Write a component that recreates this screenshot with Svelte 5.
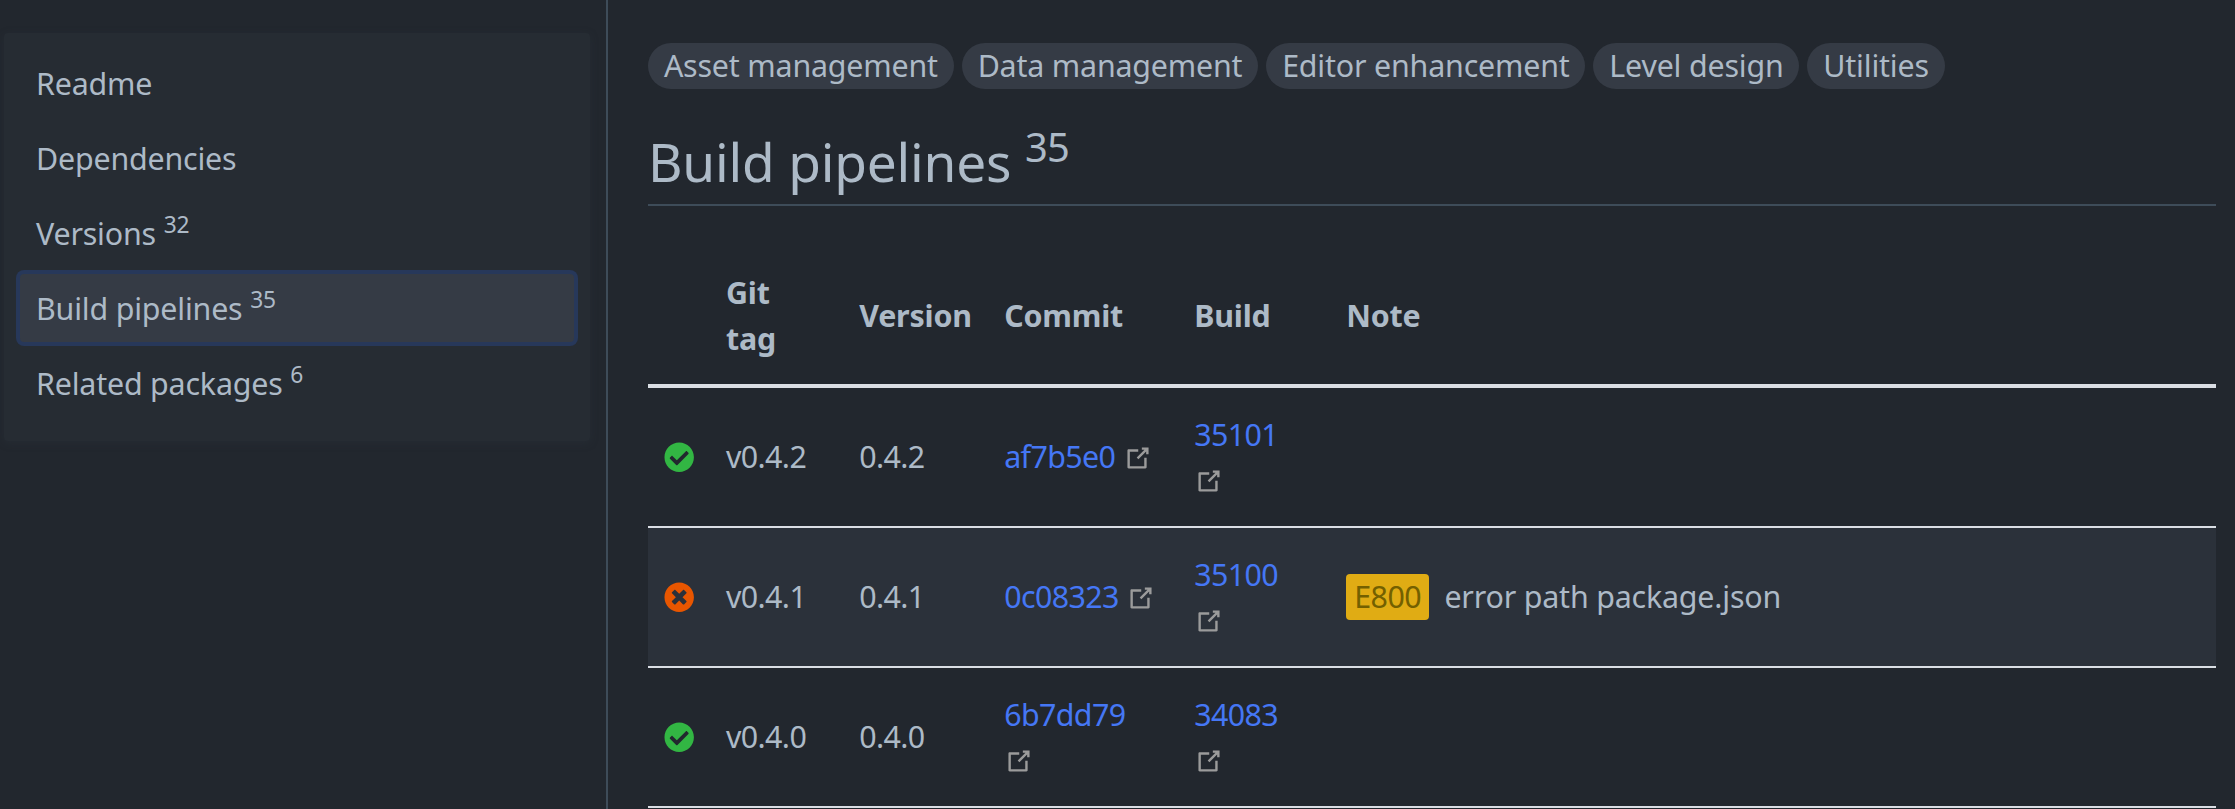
<script>
  const nav = [
    { label: 'Readme' },
    { label: 'Dependencies' },
    { label: 'Versions', count: 32 },
    { label: 'Build pipelines', count: 35, active: true },
    { label: 'Related packages', count: 6 },
  ];

  const topics = ['Asset management', 'Data management', 'Editor enhancement', 'Level design', 'Utilities'];

  const builds = [
    { ok: true, tag: 'v0.4.2', version: '0.4.2', commit: 'af7b5e0', build: '35101' },
    { ok: false, tag: 'v0.4.1', version: '0.4.1', commit: '0c08323', build: '35100', code: 'E800', note: 'error path package.json' },
    { ok: true, tag: 'v0.4.0', version: '0.4.0', commit: '6b7dd79', build: '34083', stacked: true },
  ];
</script>

{#snippet outbound()}
  <svg class="outbound" viewBox="0 0 100 100" aria-hidden="true">
    <path d="M18.8,85.1h56l0,0c2.2,0,4-1.8,4-4v-32h-8v28h-48v-48h28v-8h-32l0,0c-2.2,0-4,1.8-4,4v56C14.8,83.3,16.6,85.1,18.8,85.1z" />
    <polygon points="45.7,48.7 51.3,54.3 77.2,28.5 77.2,37.2 85.2,37.2 85.2,14.9 62.8,14.9 62.8,22.9 71.5,22.9" />
  </svg>
{/snippet}

<div class="page">
  <aside>
    <ul class="menu">
      {#each nav as item}
        <li>
          <a href="#top" class:active={item.active}>{item.label}{#if item.count}{' '}<sup>{item.count}</sup>{/if}</a>
        </li>
      {/each}
    </ul>
  </aside>

  <main>
    <div class="topics">
      {#each topics as topic}
        <span class="topic">{topic}</span>
      {/each}
    </div>

    <h3>Build pipelines <sup>35</sup></h3>

    <table>
      <colgroup>
        <col class="c-status" /><col class="c-tag" /><col class="c-version" />
        <col class="c-commit" /><col class="c-build" /><col />
      </colgroup>
      <thead>
        <tr>
          <th></th>
          <th>Git<br />tag</th>
          <th>Version</th>
          <th>Commit</th>
          <th>Build</th>
          <th>Note</th>
        </tr>
      </thead>
      <tbody>
        {#each builds as row}
          <tr>
            <td>
              {#if row.ok}
                <svg class="status ok" viewBox="0 0 512 512"><path d="M504 256c0 136.967-111.033 248-248 248S8 392.967 8 256 119.033 8 256 8s248 111.033 248 248zM227.314 387.314l184-184c6.248-6.248 6.248-16.379 0-22.627l-22.627-22.627c-6.248-6.249-16.379-6.249-22.628 0L216 308.118l-70.059-70.059c-6.248-6.248-16.379-6.248-22.628 0l-22.627 22.627c-6.248 6.248-6.248 16.379 0 22.627l104 104c6.249 6.249 16.379 6.249 22.628.001z" /></svg>
              {:else}
                <svg class="status fail" viewBox="0 0 512 512"><path d="M256 8C119 8 8 119 8 256s111 248 248 248 248-111 248-248S393 8 256 8zm121.6 313.1c4.7 4.7 4.7 12.3 0 17L338 377.6c-4.7 4.7-12.3 4.7-17 0L256 312l-65.1 65.6c-4.7 4.7-12.3 4.7-17 0L134.4 338c-4.7-4.7-4.7-12.3 0-17l65.6-65-65.6-65.1c-4.7-4.7-4.7-12.3 0-17l39.6-39.6c4.7-4.7 12.3-4.7 17 0l65 65.7 65.1-65.6c4.7-4.7 12.3-4.7 17 0l39.6 39.6c4.7 4.7 4.7 12.3 0 17L312 256l65.6 65.1z" /></svg>
              {/if}
            </td>
            <td class="num">{row.tag}</td>
            <td class="num">{row.version}</td>
            <td class="num" class:stacked={row.stacked}><a href="#top">{row.commit}{#if row.stacked}<br />{:else}{' '}{/if}{@render outbound()}</a></td>
            <td class="num stacked"><a href="#top">{row.build}<br />{@render outbound()}</a></td>
            <td>{#if row.code}<span class="code">{row.code}</span><span class="note">{row.note}</span>{/if}</td>
          </tr>
        {/each}
      </tbody>
    </table>
  </main>
</div>

<style>
  :global(body) {
    background: #22272e;
  }

  .page {
    display: flex;
    height: 809px;
    overflow: hidden;
    background: #22272e;
    color: #adbac7;
    font: 30.4px/45.6px 'Noto Sans', sans-serif;
    letter-spacing: -0.19px;
  }

  a {
    text-decoration: none;
  }

  sup {
    font-size: 75%;
    line-height: 0;
    position: relative;
    top: -0.5em;
    vertical-align: baseline;
  }

  aside {
    box-sizing: border-box;
    width: 608px;
    flex: none;
    padding: 33px 16px 0 4px;
    border-right: 2px solid #3e4c59;
  }

  .menu {
    margin: 0;
    padding: 9px 16px 24px;
    list-style: none;
    background: #262c33;
    border-radius: 4px;
    box-shadow: 0 2px 8px rgba(48, 55, 66, 0.3);
  }

  .menu li {
    padding-top: 7px;
  }

  .menu a {
    display: block;
    height: 53px;
    padding: 7.5px 16px;
    line-height: 53px;
    color: inherit;
    border-radius: 4px;
  }

  .menu a.active {
    background: #353b45;
    box-shadow: 0 0 0 4px #27385a;
  }

  main {
    flex: 1;
    padding: 43px 19px 0 40px;
  }

  .topics {
    display: flex;
    gap: 8px;
  }

  .topic {
    padding: 0 15.9px;
    height: 46px;
    border-radius: 23px;
    background: #353b45;
  }

  h3 {
    box-sizing: border-box;
    height: 79px;
    margin: 38px 0 0;
    border-bottom: 2px solid #3e4c59;
    font-size: 53.2px;
    font-weight: 400;
    line-height: 70px;
    letter-spacing: -0.2px;
  }

  h3 sup {
    letter-spacing: -0.8px;
  }

  table {
    width: 100%;
    margin-top: 38px;
    table-layout: fixed;
    border-collapse: separate;
    border-spacing: 0;
  }

  .c-status { width: 62.8px; }
  .c-tag { width: 133.2px; }
  .c-version { width: 145px; }
  .c-commit { width: 190px; }
  .c-build { width: 152px; }

  th,
  td {
    box-sizing: border-box;
    height: 140px;
    padding: 0 15.2px;
    text-align: left;
    vertical-align: middle;
    white-space: nowrap;
    border-bottom: 2px solid #dadee4;
  }

  th {
    height: 144px;
    padding-top: 3px;
    border-bottom: 4px solid #dadee4;
    font-weight: 700;
  }

  tbody tr:nth-child(even) {
    background: #2b313a;
  }

  td a {
    color: #4577f5;
  }

  .num {
    letter-spacing: -0.62px;
  }

  .stacked {
    padding-top: 2px;
  }

  .status {
    display: block;
    width: 30.4px;
    height: 30.4px;
    margin-left: 0.8px;
    fill: currentColor;
  }

  .ok { color: #32b643; }
  .fail { color: #e85600; }

  .outbound {
    display: inline-block;
    width: 30px;
    height: 30px;
    position: relative;
    top: -2px;
    vertical-align: middle;
    fill: #9b9b9b;
  }

  .stacked .outbound {
    top: -3px;
    left: 0.3px;
  }

  .code {
    display: inline-block;
    padding: 0 8px;
    height: 46px;
    border-radius: 4px;
    background: #e0ac14;
    color: #736000;
    letter-spacing: -0.5px;
  }

  .note {
    margin-left: 15.2px;
  }
</style>
